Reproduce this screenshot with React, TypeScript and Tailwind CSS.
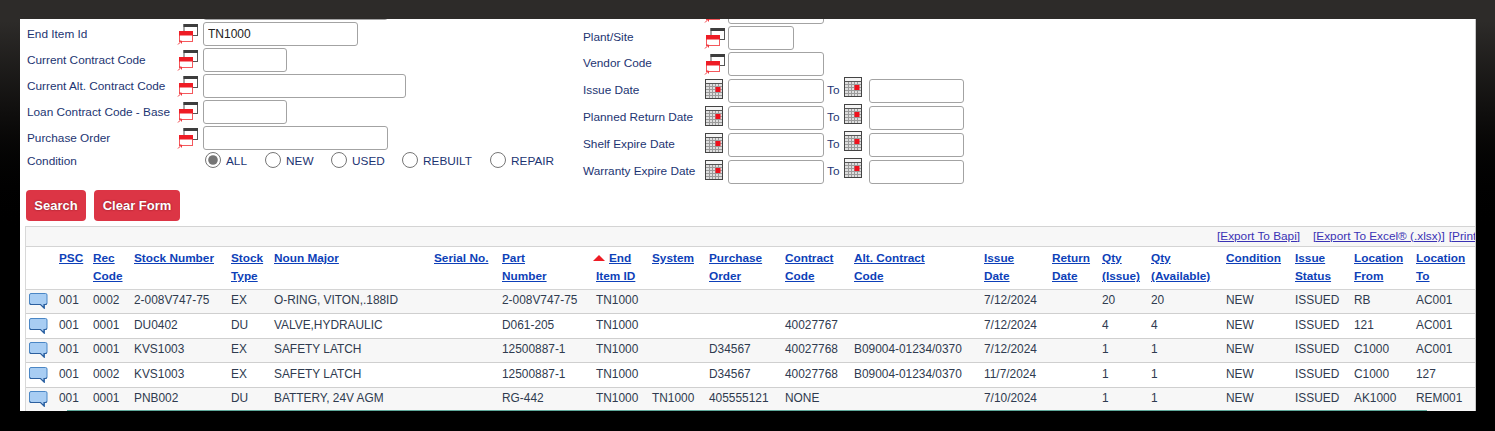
import React from 'react';

const PopupIcon = () => (
  <svg width="21" height="22" viewBox="0 0 21 22" className="shrink-0">
    <rect x="7" y="1.5" width="13.5" height="11" fill="#fff" stroke="#555" />
    <rect x="6.5" y="1" width="14.5" height="3" fill="#3d3d3d" />
    <rect x="2.5" y="8.5" width="13" height="10" fill="#fff" stroke="#f4585c" />
    <rect x="2" y="8" width="14" height="4.5" fill="#ee1c25" />
    <path d="M1 21.5 L4 18.5 M2 18 H4.5 V20.5" fill="none" stroke="#f0363c" strokeWidth="1" />
  </svg>
);

const CalendarIcon = () => (
  <svg width="18" height="20" viewBox="0 0 18 20" className="shrink-0">
    <rect x="0.5" y="0.5" width="17" height="19" fill="#dedede" stroke="#444" />
    <rect x="1" y="1" width="16" height="3" fill="#f4f4f4" />
    <path d="M1 4.5H17M1 7.5H17M1 10.5H17M1 13.5H17M1 16.5H17M4.5 5V19M7.5 5V19M10.5 5V19M13.5 5V19" stroke="#9a9a9a" strokeWidth="1" />
    <path d="M0.5 4.5H17.5" stroke="#555" strokeWidth="1" />
    <rect x="10.5" y="8" width="5" height="5" fill="#f0101c" />
  </svg>
);

const NoteIcon = () => (
  <svg width="19" height="16" viewBox="0 0 19 16" className="block">
    <path d="M2 0.5H16.5Q18 0.5 18 2V10Q18 11.5 16.5 11.5H15.5V15.5L11.5 11.5H2Q0.5 11.5 0.5 10V2Q0.5 0.5 2 0.5Z" fill="#a8cdf3" stroke="#4a86c5" />
    <path d="M1 10.5Q1 11.5 2 11.5H11.5L15 15V11.5H16.5Q17.5 11.5 17.5 10.5" fill="none" stroke="#2c5f9e" strokeWidth="1.2" />
  </svg>
);

const inputClass = 'h-6 rounded-[3px] border border-[#a3a3a3] bg-white px-1 text-[12px] text-[#222] outline-none';

const LookupRow = ({ label, width, value }: { label?: string; width: string; value?: string }) => (
  <div className="flex h-6 items-center">
    <span className="w-[150px] whitespace-nowrap pt-px">{label}</span>
    <PopupIcon />
    <input className={`${inputClass} ml-[5px] ${width}`} defaultValue={value} />
  </div>
);

const RightLookup = ({ label, width }: { label?: string; width: string }) => (
  <div className="flex h-6 items-center">
    <span className="w-[121px] whitespace-nowrap">{label}</span>
    <PopupIcon />
    <input className={`${inputClass} ml-[3px] ${width}`} />
  </div>
);

const DateRow = ({ label }: { label: string }) => (
  <div className="flex h-6 items-center">
    <span className="w-[122px] whitespace-nowrap">{label}</span>
    <span className="-mt-1"><CalendarIcon /></span>
    <input className={`${inputClass} ml-[5px] w-[96px]`} />
    <span className="ml-[3px] w-[17px]">To</span>
    <span className="-mt-2"><CalendarIcon /></span>
    <input className={`${inputClass} ml-[7px] w-[95px]`} />
  </div>
);

const conditions = [
  { label: 'ALL', width: 'w-[60px]' },
  { label: 'NEW', width: 'w-[66px]' },
  { label: 'USED', width: 'w-[71px]' },
  { label: 'REBUILT', width: 'w-[88px]' },
  { label: 'REPAIR', width: 'w-[70px]' },
];

const headers = [
  { w: 'w-[33px]', lines: [] as string[] },
  { w: 'w-[34px]', lines: ['PSC'] },
  { w: 'w-[41px]', lines: ['Rec', 'Code'] },
  { w: 'w-[97px]', lines: ['Stock Number'] },
  { w: 'w-[43px]', lines: ['Stock', 'Type'] },
  { w: 'w-[160px]', lines: ['Noun Major'] },
  { w: 'w-[68px]', lines: ['Serial No.'] },
  { w: 'w-[91px]', lines: ['Part', 'Number'] },
  { w: 'w-[59px]', lines: ['End', 'Item ID'] },
  { w: 'w-[57px]', lines: ['System'] },
  { w: 'w-[76px]', lines: ['Purchase', 'Order'] },
  { w: 'w-[69px]', lines: ['Contract', 'Code'] },
  { w: 'w-[130px]', lines: ['Alt. Contract', 'Code'] },
  { w: 'w-[68px]', lines: ['Issue', 'Date'] },
  { w: 'w-[50px]', lines: ['Return', 'Date'] },
  { w: 'w-[49px]', lines: ['Qty', '(Issue)'] },
  { w: 'w-[75px]', lines: ['Qty', '(Available)'] },
  { w: 'w-[69px]', lines: ['Condition'] },
  { w: 'w-[59px]', lines: ['Issue', 'Status'] },
  { w: 'w-[62px]', lines: ['Location', 'From'] },
  { w: 'w-[64px]', lines: ['Location', 'To'] },
];

const rows = [
  { h: 'h-[24px]', cells: ['001', '0002', '2-008V747-75', 'EX', 'O-RING, VITON,.188ID', '', '2-008V747-75', 'TN1000', '', '', '', '', '7/12/2024', '', '20', '20', 'NEW', 'ISSUED', 'RB', 'AC001'] },
  { h: 'h-[25px]', cells: ['001', '0001', 'DU0402', 'DU', 'VALVE,HYDRAULIC', '', 'D061-205', 'TN1000', '', '', '40027767', '', '7/12/2024', '', '4', '4', 'NEW', 'ISSUED', '121', 'AC001'] },
  { h: 'h-[24px]', cells: ['001', '0001', 'KVS1003', 'EX', 'SAFETY LATCH', '', '12500887-1', 'TN1000', '', 'D34567', '40027768', 'B09004-01234/0370', '7/12/2024', '', '1', '1', 'NEW', 'ISSUED', 'C1000', 'AC001'] },
  { h: 'h-[25px]', cells: ['001', '0002', 'KVS1003', 'EX', 'SAFETY LATCH', '', '12500887-1', 'TN1000', '', 'D34567', '40027768', 'B09004-01234/0370', '11/7/2024', '', '1', '1', 'NEW', 'ISSUED', 'C1000', '127'] },
  { h: 'h-[24px]', cells: ['001', '0001', 'PNB002', 'DU', 'BATTERY, 24V AGM', '', 'RG-442', 'TN1000', 'TN1000', '405555121', 'NONE', '', '7/10/2024', '', '1', '1', 'NEW', 'ISSUED', 'AK1000', 'REM001'] },
];

export default function App() {
  return (
    <div className="h-[431px] w-[1495px] overflow-hidden bg-linear-to-b from-[#2d2b29] from-[5%] to-black to-[55%] pl-5 pt-[19px] font-['Liberation_Sans',Arial,sans-serif] text-[11.8px] text-[#1c3472]">
      <div className="h-[392px] w-[1456px] overflow-hidden border-r border-[#c8c8c8] bg-white">
        <div className="flex h-[171px] pl-[7px]">
          {/* left search column */}
          <div className="-mt-[23px] flex w-[556px] flex-col gap-[2px]">
            <LookupRow width="w-[185px]" />
            <LookupRow label="End Item Id" width="w-[155px]" value="TN1000" />
            <LookupRow label="Current Contract Code" width="w-[84px]" />
            <LookupRow label="Current Alt. Contract Code" width="w-[203px]" />
            <LookupRow label="Loan Contract Code - Base" width="w-[84px]" />
            <LookupRow label="Purchase Order" width="w-[185px]" />
            <div className="-mt-[2px] flex h-6 items-center">
              <span className="w-[178px]">Condition</span>
              {conditions.map((c, i) => (
                <label key={c.label} className={`flex items-center ${c.width}`}>
                  <input type="radio" name="condition" defaultChecked={i === 0} className="-mt-1 h-4 w-4 accent-[#757575]" />
                  <span className="ml-[5px]">{c.label}</span>
                </label>
              ))}
            </div>
          </div>
          {/* right search column */}
          <div className="-mt-[19px] flex flex-col">
            <RightLookup width="w-[96px]" />
            <div className="mt-[2px]"><RightLookup label="Plant/Site" width="w-[66px]" /></div>
            <div className="mt-[2px]"><RightLookup label="Vendor Code" width="w-[96px]" /></div>
            <div className="mt-[3px] flex flex-col gap-[3px]">
              <DateRow label="Issue Date" />
              <DateRow label="Planned Return Date" />
              <DateRow label="Shelf Expire Date" />
              <DateRow label="Warranty Expire Date" />
            </div>
          </div>
        </div>

        <div className="mt-[-6px] flex h-[36px] gap-2 pl-[6px] pt-[6px]">
          <button className="h-[31px] w-[60px] rounded bg-[#dc3545] pt-px text-[13px] font-bold text-white [text-shadow:0_0_2px_#7a1520]">Search</button>
          <button className="h-[31px] w-[86px] rounded bg-[#dc3545] pt-px text-[13px] font-bold text-white [text-shadow:0_0_2px_#7a1520]">Clear Form</button>
        </div>

        <div className="ml-[5px] mt-[6px] h-[185px] w-[1450px] overflow-hidden border-l border-[#d8d8d8] text-[#2f3b4f]">
          <div className="flex h-[21px] items-center whitespace-nowrap border-y border-[#d4d4d4] bg-[#f7f7f7] pl-[1191px] text-[#3a32b4]">
            <a className="underline">[Export To Bapi]</a>
            <a className="ml-[13px] underline">[Export To Excel® (.xlsx)]</a>
            <a className="ml-[4px] underline">[Print</a>
          </div>
          <table className="w-[1454px] table-fixed border-collapse">
            <thead>
              <tr className="h-[42px] border-b border-[#d4d4d4]">
                {headers.map((h, i) => (
                  <th key={i} className={`${h.w} whitespace-nowrap p-0 text-left align-top font-bold leading-[18px] text-[#0d3fb8]`}>
                    <div className="pt-[2px]">
                      {h.lines.map((line, j) => (
                        <div key={line} className={i === 8 ? (j === 0 ? 'flex items-center' : 'pl-[3px]') : ''}>
                          {i === 8 && j === 0 && <span className="mr-[4px] h-0 w-0 border-x-[6px] border-b-[6px] border-x-transparent border-b-[#ee1c25]" />}
                          <a className="underline">{line}</a>
                        </div>
                      ))}
                    </div>
                  </th>
                ))}
              </tr>
            </thead>
            <tbody>
              {rows.map((r, i) => (
                <tr key={i} className={`${r.h} border-b border-[#cfcfcf] ${i % 2 === 0 ? 'bg-[#f7f7f7]' : 'bg-white'}`}>
                  <td className="p-0 pl-[3px]"><NoteIcon /></td>
                  {r.cells.map((c, j) => (
                    <td key={j} className={`whitespace-nowrap p-0 text-[11.9px] ${j === 7 ? 'pl-[3px]' : ''}`}>{c}</td>
                  ))}
                </tr>
              ))}
            </tbody>
          </table>
        </div>
      </div>
      <div className="ml-[47px] h-px w-[1360px] -translate-y-px bg-[#5fa89a]" />
    </div>
  );
}
